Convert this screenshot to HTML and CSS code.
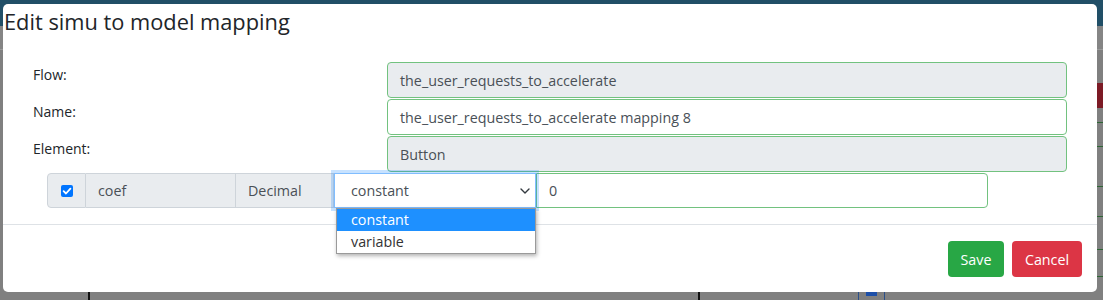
FILE: index.html
```html
<!DOCTYPE html>
<html>
<head>
<meta charset="utf-8">
<title>Edit simu to model mapping</title>
<link rel="stylesheet" href="styles.css">
</head>
<body>
<div class="page">
  <div class="bg-topbar"></div>
  <div class="bg-sub"></div>
  <div class="bg-gap"></div>
  <div class="bg-red"><div class="bg-red-cell"></div></div>
  <div class="bg-row r1"><div class="line"></div></div>
  <div class="bg-row r2"><div class="line"></div></div>
  <div class="bg-row r3"><div class="line"></div></div>
  <div class="bg-row r4"><div class="line"></div></div>
  <div class="bg-row r5"><div class="line"></div></div>
  <div class="bg-row r6"><div class="line"></div></div>
  <div class="bg-row r7"></div>
  <div class="bg-bottom">
    <div class="bc c1"></div>
    <div class="bc c2"></div>
    <div class="bc c3"></div>
    <div class="bc c4"><span class="bsq"></span></div>
    <div class="bc c5"></div>
  </div>
</div>

<div class="modal">
  <div class="modal-header">
    <h5 class="modal-title">Edit simu to model mapping</h5>
  </div>
  <div class="modal-body">
    <div class="form-row">
      <label class="form-label">Flow:</label>
      <div class="form-control readonly">the_user_requests_to_accelerate</div>
    </div>
    <div class="form-row">
      <label class="form-label">Name:</label>
      <div class="form-control">the_user_requests_to_accelerate mapping 8</div>
    </div>
    <div class="form-row">
      <label class="form-label">Element:</label>
      <div class="form-control readonly">Button</div>
    </div>
    <div class="input-group">
      <div class="ig-text ig-check">
        <span class="checkbox">
          <svg width="12" height="12" viewBox="0 0 12 12"><path d="M2.6 6.2 L5 8.5 L9.4 3.6" fill="none" stroke="#fff" stroke-width="1.8" stroke-linecap="round" stroke-linejoin="round"/></svg>
        </span>
      </div>
      <div class="ig-text ig-name">coef</div>
      <div class="ig-text ig-type">Decimal</div>
      <div class="ig-select">
        <span>constant</span>
        <svg class="chev" width="10" height="6" viewBox="0 0 10 6"><path d="M1 1 L5 5 L9 1" fill="none" stroke="#343a40" stroke-width="1.4" stroke-linecap="round" stroke-linejoin="round"/></svg>
        <ul class="dropdown">
          <li class="active">constant</li>
          <li>variable</li>
        </ul>
      </div>
      <div class="ig-input">0</div>
    </div>
  </div>
  <div class="modal-footer">
    <button class="btn btn-save">Save</button>
    <button class="btn btn-cancel">Cancel</button>
  </div>
</div>
</body>
</html>
```

FILE: styles.css
```css
* { box-sizing: border-box; }

html, body {
  margin: 0;
  padding: 0;
}

body {
  width: 1103px;
  height: 300px;
  overflow: hidden;
  background: #808080;
  font-family: "Open Sans", "Noto Sans", sans-serif;
  position: relative;
}

/* dimmed page behind the dialog */
.page {
  display: flex;
  flex-direction: column;
}
.bg-topbar { height: 26px; background: #214f67; }
.bg-sub { height: 24px; background: #858585; border-bottom: 1px solid #9a9a9a; }
.bg-gap { height: 33px; }
.bg-red { height: 25px; display: flex; justify-content: flex-end; }
.bg-red-cell { width: 60px; background: #7c1a25; }
.bg-row { display: flex; justify-content: flex-end; align-items: flex-end; }
.line { width: 60px; height: 1px; background: #2e6535; }
.r1 { height: 15px; }
.r2 { height: 24px; }
.r3 { height: 40px; }
.r4 { height: 30px; }
.r5 { height: 33px; }
.r6 { height: 27px; }
.r7 { height: 15px; }
.bg-bottom {
  height: 8px;
  display: flex;
}
.bc { height: 8px; }
.c1 { width: 88px; }
.c2 { width: 610px; border-left: 2px solid #111; }
.c3 { width: 160px; border-left: 2px solid #111; }
.c4 { width: 27px; border-left: 1px solid #2a4f8a; border-right: 1px solid #2a4f8a; padding-left: 7px; }
.bsq { display: block; width: 11px; height: 4px; background: #1d4fa8; }
.c5 { flex: 1; }

/* dialog */
.modal {
  position: absolute;
  left: 3px;
  top: 4px;
  width: 1094px;
  height: 288px;
  background: #fff;
  border-radius: 5px;
  display: flex;
  flex-direction: column;
}

.modal-header {
  height: 40px;
  padding-left: 1px;
}

.modal-title {
  margin: 0;
  font-size: 21.8px;
  font-weight: 400;
  line-height: 36px;
  color: #212529;
}

.modal-body {
  padding: 18px 0 16px 0;
}

.form-row {
  display: flex;
  margin-bottom: 1px;
}

.form-label {
  width: 384px;
  padding-left: 30px;
  font-size: 14px;
  line-height: 25px;
  color: #212529;
}

.form-control {
  width: 680px;
  height: 36px;
  border: 1px solid #72c27f;
  border-radius: 4px;
  padding: 2px 12px 0 12px;
  font-size: 14.3px;
  line-height: 32px;
  color: #495057;
  background: #fff;
}

.form-control.readonly {
  background: #e9ecef;
}

.input-group {
  display: flex;
  margin-left: 44px;
  width: 941px;
  height: 35px;
  font-size: 14.3px;
  color: #495057;
}

.ig-text {
  background: #e9ecef;
  border: 1px solid #ced4da;
  padding: 0 12px;
  line-height: 33px;
}

.ig-check {
  width: 39px;
  border-radius: 4px 0 0 4px;
  padding: 0 0 0 13px;
  display: flex;
  align-items: center;
}

.checkbox {
  width: 12px;
  height: 12px;
  background: #0075ff;
  border-radius: 2px;
  display: flex;
}

.ig-name {
  width: 150px;
  border-left: 0;
}

.ig-type {
  width: 98px;
  border-left: 0;
}

.ig-select {
  position: relative;
  width: 202px;
  border: 1px solid #80bdff;
  box-shadow: 0 0 0 3px rgba(0, 123, 255, 0.22);
  background: #fff;
  padding: 0 5px 0 16px;
  line-height: 33px;
  display: flex;
  justify-content: space-between;
  align-items: center;
  z-index: 2;
}

.dropdown {
  position: absolute;
  left: 1px;
  top: 34px;
  width: 200px;
  margin: 0;
  padding: 0;
  list-style: none;
  background: #fff;
  border: 1px solid #9a9a9a;
  box-shadow: 1px 2px 4px rgba(0, 0, 0, 0.3);
  color: #333;
}

.dropdown li {
  height: 22px;
  line-height: 21px;
  padding-left: 14px;
  font-size: 14.3px;
}

.dropdown li.active {
  background: #1e90ff;
  color: #fff;
}

.ig-input {
  flex: 1;
  border: 1px solid #72c27f;
  border-radius: 0 4px 4px 0;
  padding: 0 12px;
  line-height: 33px;
  background: #fff;
}

.modal-footer {
  border-top: 1px solid #dee2e6;
  padding: 16px 15px 15px 0;
  display: flex;
  justify-content: flex-end;
  gap: 8px;
}

.btn {
  height: 36px;
  border: 0;
  border-radius: 4px;
  font-family: "Open Sans", "Noto Sans", sans-serif;
  font-size: 14.3px;
  color: #fff;
  padding: 0 12px;
}

.btn-save { background: #28a745; width: 56px; }
.btn-cancel { background: #dc3545; width: 70px; }
```
